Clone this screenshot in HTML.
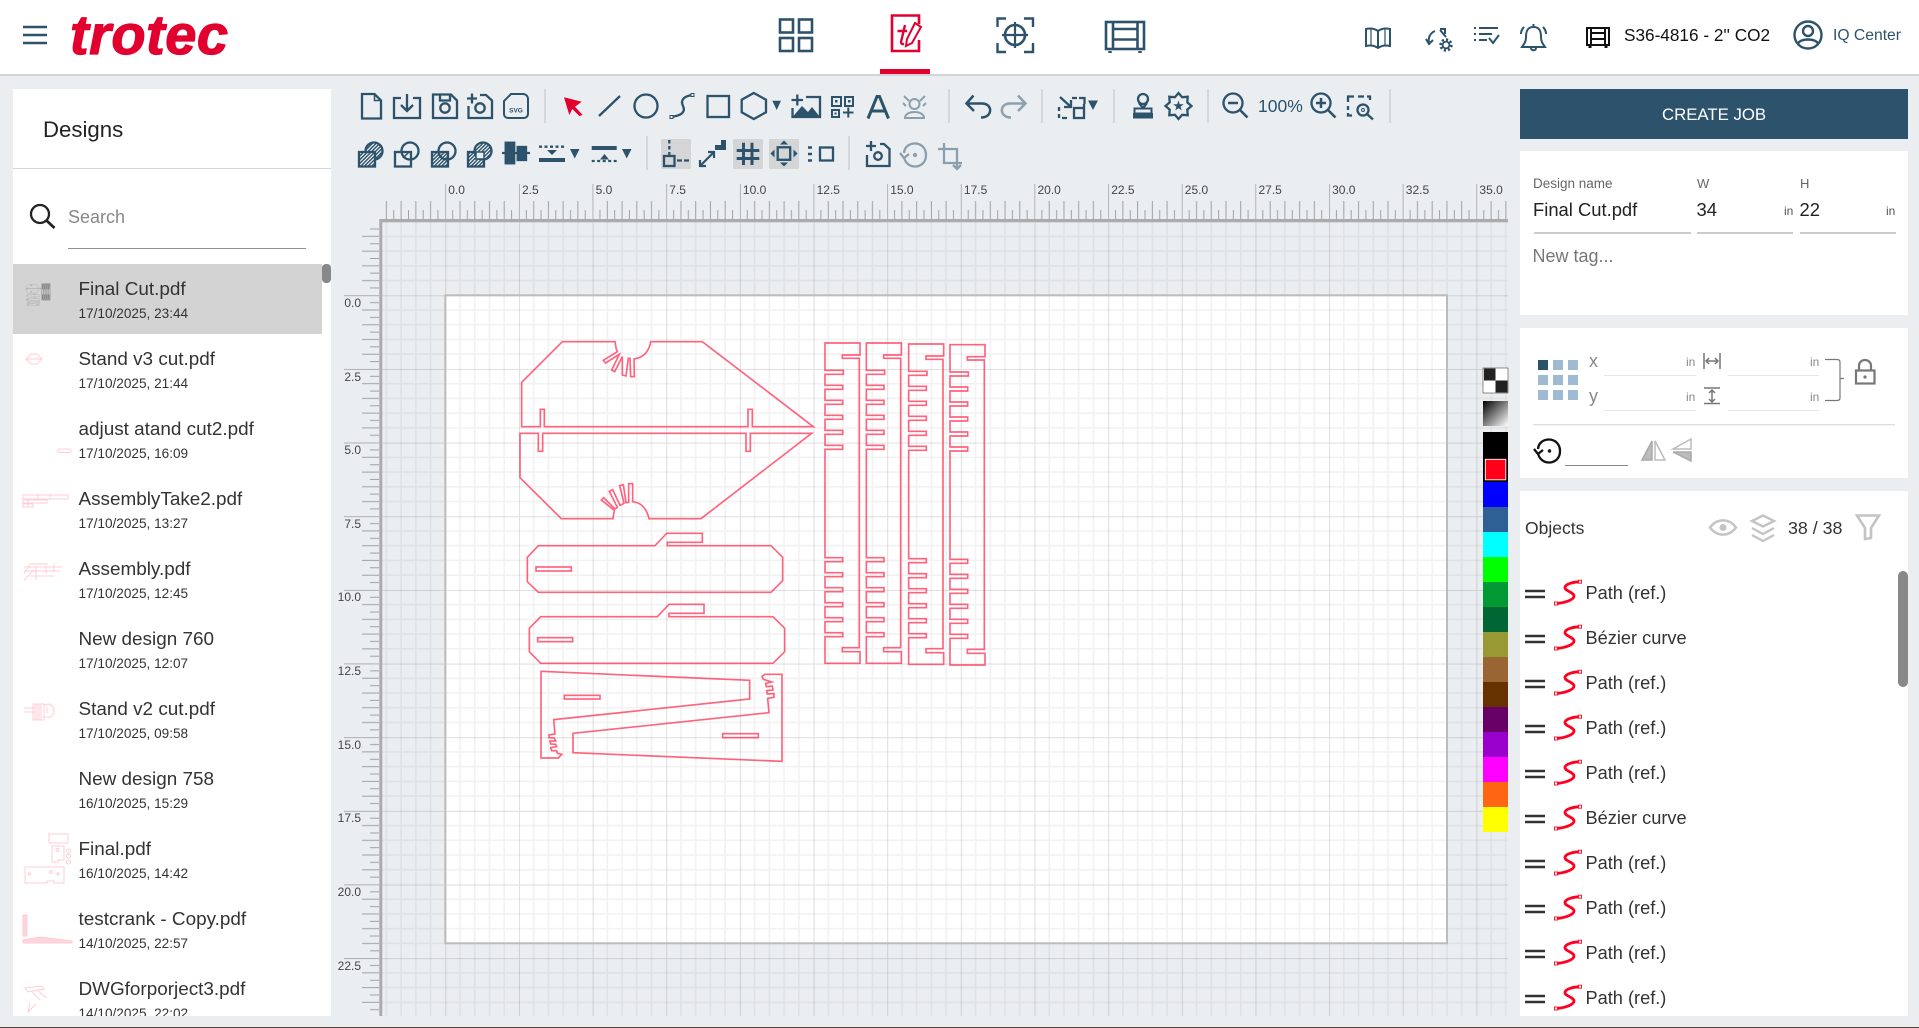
<!DOCTYPE html>
<html lang="en">
<head>
<meta charset="utf-8">
<title>Trotec Designer</title>
<style>
html,body{margin:0;padding:0;width:1919px;height:1028px;overflow:hidden;background:#ebeef1;font-family:"Liberation Sans",sans-serif;color:#333}
.box{position:absolute;background:#fff}
svg.o{position:absolute;left:0;top:0;width:1919px;height:1028px}
.t{position:absolute;white-space:nowrap;line-height:1}
.n{left:78.5px;font-size:18.9px;color:#333;margin-top:1.5px}
.d{left:78.5px;font-size:13.6px;color:#333}
.l{left:1585.5px;font-size:18.2px;color:#333}
</style>
</head>
<body>
<div class="box" style="left:0;top:0;width:1919px;height:74px"></div>
<div class="box" style="left:0;top:74px;width:1919px;height:2px;background:#d4d5d6"></div>
<div class="box" style="left:880px;top:69px;width:50px;height:5px;background:#e2002f"></div>

<!-- left panel -->
<div class="box" style="left:13px;top:89px;width:318px;height:927px;overflow:hidden">
  <div class="box" style="left:0;top:79px;width:318px;height:1px;background:#d4d4d4"></div>
  <div class="box" style="left:55px;top:159px;width:238px;height:1px;background:#8f8f8f"></div>
  <div class="box" style="left:0;top:175px;width:309px;height:70px;background:#d3d3d3"></div>
  <div class="box" style="left:309px;top:175px;width:9px;height:19px;background:#888;border-radius:4px"></div>
</div>
<!-- right panels -->
<div class="box" style="left:1520px;top:89px;width:388px;height:50px;background:#2c536b"></div>
<div class="box" style="left:1520px;top:151px;width:388px;height:164px"></div>
<div class="box" style="left:1520px;top:328px;width:388px;height:150px"></div>
<div class="box" style="left:1520px;top:491px;width:388px;height:525px"></div>
<div class="box" style="left:1898px;top:571px;width:10px;height:116px;background:#888;border-radius:5px"></div>
<div class="box" style="left:0;top:1027px;width:1919px;height:1px;background:#5d403c"></div>

<svg class="o" viewBox="0 0 1919 1028" xmlns="http://www.w3.org/2000/svg">
<defs>
  <pattern id="grid" patternUnits="userSpaceOnUse" x="445.3" y="295.3" width="73.65" height="73.65">
    <g fill="none" stroke="#000" stroke-opacity=".05" stroke-width="1.6">
      <path d="M14.73,0V73.65M29.46,0V73.65M44.19,0V73.65M58.92,0V73.65M0,14.73H73.65M0,29.46H73.65M0,44.19H73.65M0,58.92H73.65"/>
    </g>
    <path d="M0,0V73.65M0,0H73.65" fill="none" stroke="#000" stroke-opacity=".13" stroke-width="2"/>
  </pattern>
  <pattern id="rt" patternUnits="userSpaceOnUse" x="445.3" y="184" width="73.65" height="35">
    <path d="M0,0V35" stroke="#999" stroke-width="1.4"/>
    <path d="M14.73,17V35M29.46,17V35M44.19,17V35M58.92,17V35" stroke="#a0a0a0" stroke-width="1"/>
    <path d="M7.365,26V35M22.1,26V35M36.83,26V35M51.56,26V35M66.29,26V35" stroke="#a0a0a0" stroke-width="1"/>
  </pattern>
  <pattern id="rl" patternUnits="userSpaceOnUse" x="344" y="295.3" width="35" height="73.65">
    <path d="M0,0H35" stroke="#999" stroke-width="1.4"/>
    <path d="M18,14.73H35M18,29.46H35M18,44.19H35M18,58.92H35" stroke="#a0a0a0" stroke-width="1"/>
    <path d="M26,7.365H35M26,22.1H35M26,36.83H35M26,51.56H35M26,66.29H35" stroke="#a0a0a0" stroke-width="1"/>
  </pattern>
  <pattern id="ht" patternUnits="userSpaceOnUse" width="2.6" height="2.6" patternTransform="rotate(45)">
    <rect width="2.6" height="2.6" fill="#fff"/><rect width="1.5" height="2.6" fill="#2c536b"/>
  </pattern>
  <clipPath id="cv"><rect x="382" y="222" width="1126" height="794"/></clipPath>
  <g id="comb"><path d="M45,39H150V75H97V85H148V953H97V965H150V1000H45V920H98V908H45V875H98V863H45V830H98V818H45V785H98V773H45V740H98V728H45V695H98V683H45V358H98V346H45V313H98V301H45V268H98V256H45V223H98V211H45V178H98V166H45V133H100V121H45Z"/></g>
  <g id="dr1">
    <path d="M187,65H345L349,88L352,95L310,121L317,129L358,103L335,150L344,155L367,110L367,165L378,168L385,115L390,115L392,170L403,170L402,117C430,113 447,95 452,65H607L940,320H757V268H744V320H133V268H121V320H65V187Z"/>
    <path d="M60,340H115V394H128V340H738V394H751V340H935L603,596H447C440,565 425,548 398,545V491H386V547L378,548L370,494L359,497L372,550L360,556L338,509L328,514L352,562L345,567L311,533L304,540L343,571L339,596H184L60,473Z"/>
    <path d="M115,677H465L500,640H607V667H502V677H813L848,712V782L813,817H115L82,785V712Z"/>
    <rect x="108" y="741" width="106" height="12"/>
  </g>
  <g id="dr2">
    <path d="M122,290H472L507,253H612V280H507V290H819L854,325V395L819,430H122L88,395V325Z"/>
    <rect x="113" y="353" width="105" height="12"/>
    <path d="M123,454L749,481V537L161,599L165,642L147,645V653L163,654L167,663L150,663L152,672L167,673L170,680L152,683L155,692L170,692L172,700L185,703L175,714H123Z"/>
    <path d="M219,640L807,578L803,535L822,532V521L802,522L800,512L819,510L817,498L799,500L797,490L815,486L790,478L786,469L795,463H846V724L219,698Z"/>
    <rect x="193" y="526" width="107" height="11"/>
    <rect x="668" y="641" width="107" height="12"/>
  </g>
  <g id="scurve">
    <path d="M1556,603.5C1564,603 1574,600 1574,596C1574,592 1564,591 1565,587C1566,584 1573,582 1580,581.7" fill="none" stroke="#ff0020" stroke-width="2.8"/>
    <rect x="1554.5" y="602" width="3" height="3" fill="#fff" stroke="#ff0020" stroke-width=".9"/>
    <rect x="1578.5" y="580.2" width="3" height="3" fill="#fff" stroke="#ff0020" stroke-width=".9"/>
    <path d="M1525,591H1545M1525,597H1545" stroke="#333" stroke-width="2.5"/>
  </g>
</defs>

<!-- rulers -->
<rect x="383" y="184" width="1125" height="35" fill="url(#rt)"/>
<rect x="344" y="225" width="35" height="791" fill="url(#rl)"/>
<!-- canvas -->
<g clip-path="url(#cv)">
  <rect x="445.3" y="295.3" width="1001.7" height="648" fill="#fff"/>
  <rect x="382" y="222" width="1126" height="794" fill="url(#grid)"/>
  <rect x="445.3" y="295.3" width="1001.7" height="648" fill="none" stroke="#bcbcbc" stroke-width="2"/>
</g>
<path d="M380.8,1016V220.5H1508" fill="none" stroke="#ababab" stroke-width="3"/>

<!-- drawing -->
<g fill="none" stroke="#ff3355" stroke-opacity=".76" stroke-linejoin="miter">
  <g transform="translate(500,320) scale(.33333)" stroke-width="5">
    <use href="#dr1"/>
  </g>
  <g transform="translate(500,520) scale(.33333)" stroke-width="5">
    <use href="#dr2"/>
  </g>
  <g transform="translate(810,330) scale(.33333)" stroke-width="5">
    <use href="#comb"/>
    <use href="#comb" x="124"/>
    <use href="#comb" x="251" y="3"/>
    <use href="#comb" x="375" y="5"/>
  </g>
</g>

<!-- palette -->
<g>
  <rect x="1483" y="368" width="25" height="25" fill="#fff" stroke="#222" stroke-width=".5"/>
  <rect x="1484" y="368.5" width="11.5" height="12" fill="#222"/><rect x="1495.5" y="380.5" width="12" height="12" fill="#222"/>
  <linearGradient id="gr" x1="0" y1="0" x2="1" y2="1"><stop offset="0" stop-color="#000"/><stop offset="1" stop-color="#fff"/></linearGradient>
  <rect x="1483" y="401" width="25" height="25" fill="url(#gr)"/>
  <rect x="1483" y="432" width="25" height="25" fill="#000"/>
  <rect x="1483" y="457" width="25" height="25" fill="#000"/>
  <rect x="1485.3" y="459.3" width="20.5" height="20.5" fill="#ff0018" stroke="#fff" stroke-width=".9"/>
  <rect x="1483" y="482" width="25" height="25" fill="#0000ff"/>
  <rect x="1483" y="507" width="25" height="25" fill="#2e6096"/>
  <rect x="1483" y="532" width="25" height="25" fill="#00ffff"/>
  <rect x="1483" y="557" width="25" height="25" fill="#00ff00"/>
  <rect x="1483" y="582" width="25" height="25" fill="#009933"/>
  <rect x="1483" y="607" width="25" height="25" fill="#006633"/>
  <rect x="1483" y="632" width="25" height="25" fill="#999933"/>
  <rect x="1483" y="657" width="25" height="25" fill="#996633"/>
  <rect x="1483" y="682" width="25" height="25" fill="#663300"/>
  <rect x="1483" y="707" width="25" height="25" fill="#660066"/>
  <rect x="1483" y="732" width="25" height="25" fill="#9900cc"/>
  <rect x="1483" y="757" width="25" height="25" fill="#ff00ff"/>
  <rect x="1483" y="782" width="25" height="25" fill="#ff6611"/>
  <rect x="1483" y="807" width="25" height="25" fill="#ffff00"/>
</g>

<!-- header left -->
<path d="M23,27H47M23,35H47M23,43H47" stroke="#2c536b" stroke-width="2.4"/>
<text x="70" y="54" font-family="'Liberation Sans',sans-serif" font-weight="700" font-style="italic" font-size="56" fill="#e2002f" stroke="#e2002f" stroke-width="1.2" stroke-linejoin="round" textLength="158" lengthAdjust="spacing">trotec</text>

<!-- header nav -->
<g fill="none" stroke="#2c536b" stroke-width="2.6">
  <rect x="780" y="19.5" width="13" height="13"/><rect x="799" y="19.5" width="13" height="13"/>
  <rect x="780" y="38" width="13" height="13"/><rect x="799" y="38" width="13" height="13"/>
  <path d="M997.5,27V18.5H1006M1024,18.5H1033V27M1033,43V52H1024M1006,52H997.5V43" stroke-width="2.4"/>
  <circle cx="1015" cy="35" r="10"/>
  <path d="M1015,22V48M1002,35H1028" stroke-width="2.2"/>
  <rect x="1106" y="22" width="38" height="27"/>
  <path d="M1113,22V49M1137.5,22V49M1113,29H1137.5M1113,39.5H1137.5"/>
  <path d="M1110,51V53M1140,51V53" stroke-width="3.5"/>
  <!-- right small -->
  <path d="M1378,31V48M1378,31C1374,28 1370,28 1366,29V46C1370,45 1374,45 1378,48C1382,45 1386,45 1390,46V29C1386,28 1382,28 1378,31Z" stroke-width="2"/>
  <path d="M1371,29V45M1385,29V45" stroke-width="1.2"/>
  <path d="M1435,31C1430,33 1428,38 1429,42M1426,39L1429,44L1433,40" stroke-width="2"/>
  <path d="M1440,30L1446,37M1440,29H1445V34" stroke-width="2"/>
  <circle cx="1446" cy="45" r="5.4" stroke-width="2.6" stroke-dasharray="2.2 2"/>
  <circle cx="1446" cy="45" r="3.4" stroke-width="1.8"/>
  <path d="M1474,28H1476M1479,28H1498M1474,34H1476M1479,34H1492M1474,40H1476M1479,40H1487M1489,38L1493,43L1499,35" stroke-width="2"/>
  <path d="M1533.5,27C1527,27 1526,32 1526,37C1526,42 1524,44 1522,47H1545C1543,44 1541,42 1541,37C1541,32 1540,27 1533.5,27ZM1531,48C1531,51 1536,51 1536,48M1533.5,24V27M1524,27C1522,29 1521,31 1521,34M1543,27C1545,29 1546,31 1546,34" stroke-width="2"/>
  <circle cx="1808" cy="35" r="13.5" stroke-width="2.4"/>
  <circle cx="1808" cy="31" r="5" stroke-width="2.4"/>
  <path d="M1798,44C1799,38 1817,38 1818,44" stroke-width="2.4"/>
</g>
<g fill="none" stroke="#111" stroke-width="2">
  <rect x="1587" y="28" width="22" height="17"/>
  <path d="M1591,28V45M1605,28V45M1591,33H1605M1591,39H1605"/>
  <path d="M1590,46V48M1606,46V48" stroke-width="3"/>
</g>
<g fill="none" stroke="#e2002f" stroke-width="2.6">
  <path d="M919,24V15.5H892V51H919V40"/>
  <path d="M905,25L901,42Q901,44.5 904,44M897.5,31H907" stroke-width="2.4"/>
  <path d="M915,23L921,27L912,43L906,46L907,39Z" stroke-width="2"/>
</g>

<!-- toolbar row 1 -->
<g fill="none" stroke="#2c536b" stroke-width="2.3">
  <path d="M362,94H374.5L381,100.5V118.5H362Z"/><path d="M374.5,94V100.5H381" stroke-width="1.5"/>
  <path d="M401,98H394V118H420V98H413M407,94V111M401,105L407,111L413,105"/>
  <path d="M433,94.5H451L457,100.5V118H433ZM440,94.5V100.5H450V94.5"/><circle cx="445" cy="108" r="4.7"/>
  <path d="M467,98.5H477M472,93.5V103.5M480,95H486L492,100.5V118H468.5V106"/><circle cx="480" cy="108" r="4.7"/>
  <path d="M511,94H523A5,5 0 0 1 528,99V114A4,4 0 0 1 524,118H508A4,4 0 0 1 504,114V101Z" stroke-width="2"/>
  <path d="M599,116L620,96"/>
  <circle cx="646" cy="106" r="11.5"/>
  <path d="M671,116.7C681,116 686,112 683,106C680,100 684,96 692.7,95"/>
  <rect x="670" y="115.5" width="3" height="3" fill="#ebeef1" stroke-width="1"/><rect x="691" y="93.5" width="3" height="3" fill="#ebeef1" stroke-width="1"/>
  <rect x="707.5" y="96" width="21.5" height="21"/>
  <path d="M753.8,93L766,99.7V112.3L753.8,119L741.7,112.3V99.7Z"/>
  <path d="M791.5,100H803M797.3,94.5V105.5M806,97H820V117H792.5V108"/>
  <path d="M832,97H841V106H832ZM845,97H853V106H845ZM832,110H839V117H832ZM843,112.5H853.5M848.3,107.5V117.5" stroke-width="2"/>
  <path d="M868,118.5L877,96.5H879.5L888.5,118.5M871.5,111H885" stroke-width="3"/>
  <g opacity=".5" stroke-width="2"><circle cx="914.5" cy="104" r="5"/><path d="M905,118C905,110 924,110 924,118ZM904,96L909,101M925,96L920,101M903,103L906,106M926,103L923,106"/></g>
  <path d="M973.5,95.5L966.5,103.5L974,111M967,103.5H982C993,103.5 993,117.5 981,117.5" stroke-width="2.5"/>
  <path d="M1018,95.5L1025.5,103.5L1018,111M1025,103.5H1010C999,103.5 999,117.5 1011,117.5" stroke-width="2.5" opacity=".5"/>
  <path d="M1059,107V111M1059,114V118M1062,118H1067M1072,98H1077M1079,98H1084.5V104M1084,104V107M1060,97L1071,107M1071,100V107H1064"/>
  <rect x="1074" y="108" width="10" height="10"/>
  <circle cx="1143" cy="99" r="5"/><path d="M1139,103L1143,108L1147,103"/>
  <rect x="1134.5" y="108.5" width="17" height="5" stroke-width="2"/>
  <path d="M1178.5,93L1182.1,97.2L1187.7,96.8L1187.3,102.4L1191.5,106L1187.3,109.6L1187.7,115.2L1182.1,114.8L1178.5,119L1174.9,114.8L1169.3,115.2L1169.7,109.6L1165.5,106L1169.7,102.4L1169.3,96.8L1174.9,97.2Z"/>
  <circle cx="1233" cy="103" r="9.5"/><path d="M1240,110L1247.5,117.5M1228,103H1238" stroke-width="2.5"/>
  <circle cx="1321" cy="103" r="9.5"/><path d="M1328,110L1335.5,117.5M1316,103H1326M1321,98V108" stroke-width="2.5"/>
  <path d="M1348,102V96.5H1354M1358,96.5H1364M1367,96.5H1370V100M1348,106V110M1348,113V115.5H1352"/>
  <circle cx="1363" cy="110" r="5.5"/><path d="M1367,114L1373,119.5"/><circle cx="1363" cy="110" r="1.5" stroke-width="1"/>
</g>
<g fill="#2c536b">
  <path d="M772.3,100.7H781L776.7,110Z"/>
  <path d="M792.5,117L802,106L808,112L812,107L820,117Z"/>
  <rect x="1133" y="113" width="20" height="5.5"/>
  <path d="M1178.5,100.5L1179.8,104.2L1183.7,104.3L1180.6,106.7L1181.7,110.4L1178.5,108.2L1175.3,110.4L1176.4,106.7L1173.3,104.3L1177.2,104.2Z"/>
  <path d="M1088,100.5H1098L1093,110Z"/>
  <rect x="835" y="100" width="2.5" height="2.5"/><rect x="848" y="100" width="2.5" height="2.5"/><rect x="834.5" y="112.5" width="2" height="2"/>
</g>
<polygon points="564,97.3 581.7,101.7 575,106.7 582.7,115 579.3,116 572.3,109 569.3,115" fill="#e2002f"/>
<text x="516" y="112.5" text-anchor="middle" font-family="'Liberation Sans',sans-serif" font-weight="700" font-size="6.5" fill="#2c536b">SVG</text>
<!-- separators -->
<path d="M545,89V123M949,89V123M1042,89V123M1114,89V123M1208,89V123M1390,89V123M647,136V170M849,136V170" stroke="#cdd0d2" stroke-width="1.5"/>

<!-- toolbar row 2 -->
<rect x="661" y="139" width="30" height="30" fill="#d3d5d7"/>
<rect x="733" y="139" width="30" height="30" fill="#d3d5d7"/>
<rect x="769" y="139" width="30" height="30" fill="#d3d5d7"/>
<g stroke="#2c536b" stroke-width="2.3" fill="none">
  <!-- booleans -->
  <circle cx="374" cy="151" r="8.5" fill="url(#ht)"/><rect x="359" y="152" width="16" height="14.5" fill="url(#ht)"/>
  <circle cx="410" cy="151" r="8.5"/><rect x="395" y="152" width="16" height="14.5"/><path d="M403,158L409,152" stroke-width="1.5"/>
  <rect x="432" y="152" width="16" height="14.5" fill="url(#ht)"/><circle cx="447" cy="151" r="8.5"/>
  <rect x="468" y="152" width="16" height="14.5" fill="url(#ht)"/><circle cx="483" cy="151" r="8.5" fill="url(#ht)"/><path d="M476,152H484V159H476Z" fill="#ebeef1" stroke-width="1.5"/>
  <!-- align -->
  <path d="M502,153H530"/>
  <rect x="505.7" y="142.7" width="8.5" height="20.6" fill="#2c536b"/><rect x="517.7" y="147" width="8.3" height="13" fill="#2c536b"/>
  <path d="M539,146.7H565" stroke-dasharray="3 2.5"/><path d="M539,160H565" stroke-width="4"/>
  <path d="M591.7,148H616.7" stroke-width="4"/><path d="M591.7,161H617" stroke-dasharray="3 2.5"/>
  <!-- snap -->
  <path d="M669.3,140V155" stroke-dasharray="3.5 2.5"/><rect x="664" y="156" width="10.5" height="10"/><path d="M677,160.5H690" stroke-dasharray="5 2"/>
  <path d="M700,166L714,152M700,160V166H706M708,152H714V158" stroke-width="2.2"/>
  <path d="M743.5,142.7V165M752,142.7V165M736.7,150.5H759.3M736.7,158.5H759.3" stroke-width="3"/>
  <rect x="777.7" y="147.3" width="12.5" height="12.5"/>
  <rect x="820" y="147.5" width="13" height="13"/>
  <path d="M808,147.5H812M808,154H812M808,160.5H812" stroke-width="2.5"/>
  <path d="M871,141V151M866,146H876M880,144H884L889.5,149V166H867V155"/>
  <circle cx="878" cy="156" r="3.8"/>
  <g opacity=".5" stroke-width="2.3">
    <path d="M904,153C905,140 926,140 926,155C926,170 906,170 904,157M900,153L904,158L909,154"/><circle cx="915" cy="155" r="1"/>
    <path d="M938,149H948M944,143V150M944,149H957V163H962M957,149V163H944V149M957,163V168M953,165L957,169L961,165"/>
  </g>
</g>
<g fill="#2c536b">
  <path d="M547,150H557L552,155Z"/><path d="M600,159.5H609L604.5,154Z"/>
  <path d="M570,149H579.5L574.7,158.5Z"/><path d="M622,149H631.5L626.7,158.5Z"/>
  <path d="M715,150V145H721V140H726V150Z"/>
  <path d="M784,140.5L788,144.5H780ZM784,166.5L780,162.5H788ZM770.5,153.5L774.5,149.5V157.5ZM797.5,153.5L793.5,149.5V157.5Z"/>
</g>

<!-- Design props icons -->
<g>
  <rect x="1538" y="360" width="10" height="10" fill="#2c536b"/>
  <g fill="#9fbbd3">
    <rect x="1553" y="360" width="10" height="10"/><rect x="1568" y="360" width="10" height="10"/>
    <rect x="1538" y="375" width="10" height="10"/><rect x="1553" y="375" width="10" height="10"/><rect x="1568" y="375" width="10" height="10"/>
    <rect x="1538" y="390" width="10" height="10"/><rect x="1553" y="390" width="10" height="10"/><rect x="1568" y="390" width="10" height="10"/>
  </g>
  <path d="M1604,375.5H1696M1728,375.5H1819M1604,410.5H1696M1728,410.5H1819" stroke="#e6e6e6" stroke-width="1"/>
  <path d="M1533,424.7H1895" stroke="#cfd2da" stroke-width="1"/>
  <path d="M1565,465.5H1628" stroke="#888" stroke-width="1"/>
  <path d="M1534,233H1691M1697,233H1793M1800,233H1896" stroke="#999" stroke-width="1"/>
  <g fill="none" stroke="#777" stroke-width="1.5">
    <path d="M1704,353V369M1720,353V369M1706,361H1718M1709,358L1706,361L1709,364M1715,358L1718,361L1715,364"/>
    <path d="M1704,388H1720M1704,403.5H1720M1712,390V402M1709,393L1712,390L1715,393M1709,399L1712,402L1715,399"/>
    <path d="M1825,359.5H1837Q1840,359.5 1840,362V378.5H1844M1840,378.5V398Q1840,400.5 1837,400.5H1825" stroke-width="1.2"/>
    <path d="M1859,370V366C1859,358 1871,358 1871,366V370" stroke-width="2.2"/>
    <rect x="1856" y="370.5" width="18.5" height="13" stroke-width="2.2"/>
  </g>
  <circle cx="1865" cy="377" r="1.6" fill="#777"/>
  <path d="M1538,449C1539,436 1560,436 1560,451C1560,466 1540,466 1538,453M1534,449L1538,454L1543,450" fill="none" stroke="#111" stroke-width="2.3"/>
  <circle cx="1549.5" cy="451" r="1.7" fill="#111"/>
  <path d="M1652,441V460H1642Z" fill="#bbb" stroke="#aaa" stroke-width="1.5"/>
  <path d="M1655,441V460H1665Z" fill="#fff" stroke="#bbb" stroke-width="1.5"/>
  <path d="M1691,439V449H1673Z" fill="#fff" stroke="#bbb" stroke-width="1.5"/>
  <path d="M1691,461V452H1673Z" fill="#bbb" stroke="#aaa" stroke-width="1.5"/>
  <!-- objects icons -->
  <g fill="none" stroke="#c4c4c4" stroke-width="2.4">
    <path d="M1710,527.5C1717,518 1729,518 1736,527.5C1729,537 1717,537 1710,527.5Z"/>
    <path d="M1752,521L1763,515.5L1774,521L1763,526.5ZM1752,528L1763,534L1774,528M1752,535L1763,541L1774,535"/>
    <path d="M1857,515.5H1879L1871,528V538L1865,539V528Z" stroke-width="2.6"/>
  </g>
  <circle cx="1723" cy="527.5" r="3.5" fill="#c4c4c4"/>
</g>
<!-- object rows -->
<g>
  <use href="#scurve"/>
  <use href="#scurve" y="45"/>
  <use href="#scurve" y="90"/>
  <use href="#scurve" y="135"/>
  <use href="#scurve" y="180"/>
  <use href="#scurve" y="225"/>
  <use href="#scurve" y="270"/>
  <use href="#scurve" y="315"/>
  <use href="#scurve" y="360"/>
  <use href="#scurve" y="405"/>
</g>
<!-- search -->
<circle cx="40" cy="214" r="9" fill="none" stroke="#222" stroke-width="2.3"/><path d="M46.5,220.5L54.5,228" stroke="#222" stroke-width="2.8"/>

<!-- thumbnails -->
<g fill="none">
  <g stroke="#8a8a8a" stroke-width=".6">
    <g transform="translate(26,284) scale(.052)">
      <g transform="translate(-20,-20)" stroke-width="11"><g transform="scale(.33)"><use href="#dr1"/><use href="#dr2" y="600"/></g></g>
      <g transform="translate(290,-20) scale(.33)" stroke-width="34"><use href="#comb"/><use href="#comb" x="124"/><use href="#comb" x="251"/><use href="#comb" x="375"/></g>
    </g>
  </g>
  <g stroke="#ffcdd5" stroke-width="1">
    <path d="M26,359L31,354H37L42,359L37,364H31ZM26,359H42"/>
    <rect x="58" y="449" width="13" height="3.5" rx="1.7"/>
    <path d="M23,495H68V499H23ZM23,500H47V503H23ZM23,504H33V507H23ZM38,494V499M50,494V499M28,500V507"/>
    <path d="M24,567H62M24,571H60M30,576H54M24,574L30,564H48M24,580L34,570M36,566V580M46,566V574M54,564V572"/>
    <path d="M24,708H35M24,712H35M33,704H44V720H33ZM35,704V720M37,704V720M39,704V720M41,704V720M44,706C48,702 54,705 54,711C54,717 48,719 44,716M47,707V713"/>
    <rect x="49" y="834" width="19" height="9"/>
    <path d="M52,846H64V860H58V862H52Z"/><circle cx="57.5" cy="850" r="1.5"/><circle cx="68.5" cy="851" r="2"/><circle cx="68.5" cy="856" r="2"/><circle cx="68.5" cy="862" r="2"/>
    <path d="M25,867H64V883H54V881H47V883H25Z"/><circle cx="29.5" cy="874" r="1.3"/><circle cx="51" cy="872" r="1.5"/><circle cx="58" cy="874" r="1.3"/>
    <path d="M23,915H27V936H23Z" fill="#ffd5db"/>
    <path d="M23,940L40,937L72,941V943H23Z" fill="#ffd5db"/>
    <path d="M25,988L42,986L44,989L28,992ZM32,992L40,1000M38,991L47,998M30,1003L28,1012L36,1004"/>
  </g>
</g>
</svg>

<!-- header text -->
<span class="t" style="left:1624px;top:26.5px;font-size:17.2px;color:#111">S36-4816 - 2'' CO2</span>
<span class="t" style="left:1833px;top:27.5px;font-size:15.7px;color:#2c536b">IQ Center</span>

<!-- left panel text -->
<span class="t" style="left:43px;top:118.5px;font-size:22.2px;color:#222">Designs</span>
<span class="t" style="left:68px;top:208px;font-size:18px;color:#888">Search</span>
<span class="t n" style="top:279.5px">Final Cut.pdf</span><span class="t d" style="top:307px">17/10/2025, 23:44</span>
<span class="t n" style="top:349.5px">Stand v3 cut.pdf</span><span class="t d" style="top:377px">17/10/2025, 21:44</span>
<span class="t n" style="top:419.5px">adjust atand cut2.pdf</span><span class="t d" style="top:447px">17/10/2025, 16:09</span>
<span class="t n" style="top:489.5px">AssemblyTake2.pdf</span><span class="t d" style="top:517px">17/10/2025, 13:27</span>
<span class="t n" style="top:559.5px">Assembly.pdf</span><span class="t d" style="top:587px">17/10/2025, 12:45</span>
<span class="t n" style="top:629.5px">New design 760</span><span class="t d" style="top:657px">17/10/2025, 12:07</span>
<span class="t n" style="top:699.5px">Stand v2 cut.pdf</span><span class="t d" style="top:727px">17/10/2025, 09:58</span>
<span class="t n" style="top:769.5px">New design 758</span><span class="t d" style="top:797px">16/10/2025, 15:29</span>
<span class="t n" style="top:839.5px">Final.pdf</span><span class="t d" style="top:867px">16/10/2025, 14:42</span>
<span class="t n" style="top:909.5px">testcrank - Copy.pdf</span><span class="t d" style="top:937px">14/10/2025, 22:57</span>
<span class="t n" style="top:979.5px">DWGforporject3.pdf</span>
<div style="position:absolute;left:0;top:1007px;width:331px;height:9px;overflow:hidden"><span class="t d" style="top:-.5px">14/10/2025, 22:02</span></div>

<!-- ruler labels -->
<div style="font-size:12px;color:#444">
<span class="t" style="left:448.3px;top:184px">0.0</span><span class="t" style="left:522px;top:184px">2.5</span><span class="t" style="left:595.6px;top:184px">5.0</span><span class="t" style="left:669.3px;top:184px">7.5</span><span class="t" style="left:742.9px;top:184px">10.0</span><span class="t" style="left:816.6px;top:184px">12.5</span><span class="t" style="left:890.2px;top:184px">15.0</span><span class="t" style="left:963.9px;top:184px">17.5</span><span class="t" style="left:1037.5px;top:184px">20.0</span><span class="t" style="left:1111.2px;top:184px">22.5</span><span class="t" style="left:1184.8px;top:184px">25.0</span><span class="t" style="left:1258.5px;top:184px">27.5</span><span class="t" style="left:1332.1px;top:184px">30.0</span><span class="t" style="left:1405.8px;top:184px">32.5</span><span class="t" style="left:1479.4px;top:184px">35.0</span>
<span class="t" style="right:1558px;top:296.5px">0.0</span><span class="t" style="right:1558px;top:370.5px">2.5</span><span class="t" style="right:1558px;top:443.5px">5.0</span><span class="t" style="right:1558px;top:517.5px">7.5</span><span class="t" style="right:1558px;top:591px">10.0</span><span class="t" style="right:1558px;top:664.5px">12.5</span><span class="t" style="right:1558px;top:738.5px">15.0</span><span class="t" style="right:1558px;top:811.5px">17.5</span><span class="t" style="right:1558px;top:885.5px">20.0</span><span class="t" style="right:1558px;top:959.5px">22.5</span>
</div>
<span class="t" style="left:1258px;top:98px;font-size:17.5px;color:#2c536b">100%</span>

<!-- right panel text -->
<span class="t" style="left:1662px;top:106.5px;font-size:16.8px;color:#fff">CREATE JOB</span>
<span class="t" style="left:1533px;top:177px;font-size:13.5px;color:#666">Design name</span>
<span class="t" style="left:1697px;top:177px;font-size:13px;color:#666">W</span>
<span class="t" style="left:1800px;top:177px;font-size:13px;color:#666">H</span>
<span class="t" style="left:1533px;top:200.5px;font-size:18.4px;color:#222">Final Cut.pdf</span>
<span class="t" style="left:1696.5px;top:200.5px;font-size:18.4px;color:#222">34</span>
<span class="t" style="left:1799.5px;top:200.5px;font-size:18.4px;color:#222">22</span>
<span class="t" style="left:1784px;top:205px;font-size:12px;color:#555">in</span>
<span class="t" style="left:1886px;top:205px;font-size:12px;color:#555">in</span>
<span class="t" style="left:1532.5px;top:247px;font-size:18px;color:#777">New tag...</span>
<span class="t" style="left:1589px;top:351.5px;font-size:18px;color:#888">x</span>
<span class="t" style="left:1589px;top:386.5px;font-size:18px;color:#888">y</span>
<span class="t" style="left:1686px;top:356px;font-size:12px;color:#888">in</span>
<span class="t" style="left:1686px;top:391px;font-size:12px;color:#888">in</span>
<span class="t" style="left:1810px;top:356px;font-size:12px;color:#888">in</span>
<span class="t" style="left:1810px;top:391px;font-size:12px;color:#888">in</span>
<span class="t" style="left:1525px;top:519.5px;font-size:17.5px;color:#333">Objects</span>
<span class="t" style="left:1788px;top:519.5px;font-size:17.8px;color:#333">38 / 38</span>
<span class="t l" style="top:584px">Path (ref.)</span>
<span class="t l" style="top:629px">Bézier curve</span>
<span class="t l" style="top:674px">Path (ref.)</span>
<span class="t l" style="top:719px">Path (ref.)</span>
<span class="t l" style="top:764px">Path (ref.)</span>
<span class="t l" style="top:809px">Bézier curve</span>
<span class="t l" style="top:854px">Path (ref.)</span>
<span class="t l" style="top:899px">Path (ref.)</span>
<span class="t l" style="top:944px">Path (ref.)</span>
<span class="t l" style="top:989px">Path (ref.)</span>
</body>
</html>
